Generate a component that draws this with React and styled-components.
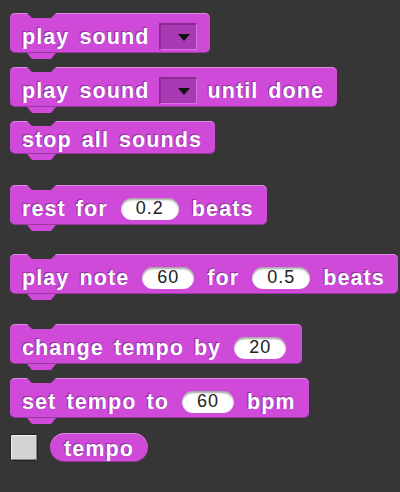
import React from 'react';
import styled, { createGlobalStyle } from 'styled-components';

const GlobalStyle = createGlobalStyle`
  html, body {
    margin: 0;
    padding: 0;
    background: #363636;
  }
  body {
    font-family: "Liberation Sans", Arial, sans-serif;
  }
`;

function Label({ text }) {
  return text.split(' ').map((w, i) => <Word key={i}>{w}</Word>);
}

function App() {
  return (
    <Palette>
      <GlobalStyle />
      <Block>
        <Label text="play sound" />
        <Dropdown />
      </Block>
      <Block $gap={14}>
        <Label text="play sound" />
        <Dropdown />
        <Label text="until done" />
      </Block>
      <Block $gap={14} $slim>
        <Label text="stop all sounds" />
      </Block>
      <Block $gap={31}>
        <Label text="rest for" />
        <Slot>0.2</Slot>
        <Label text="beats" />
      </Block>
      <Block $gap={29}>
        <Label text="play note" />
        <Slot>60</Slot>
        <Label text="for" />
        <Slot>0.5</Slot>
        <Label text="beats" />
      </Block>
      <Block $gap={30}>
        <Label text="change tempo by" />
        <Slot>20</Slot>
      </Block>
      <Block $gap={14}>
        <Label text="set tempo to" />
        <Slot>60</Slot>
        <Label text="bpm" />
      </Block>
      <WatcherRow>
        <Checkbox />
        <Reporter>
          <Word>tempo</Word>
        </Reporter>
      </WatcherRow>
    </Palette>
  );
}

export default App;

const SOUND = '#CF4AD9';
const BG = '#363636';

const Palette = styled.div`
  height: 492px;
  box-sizing: border-box;
  padding: 13px 0 0 10px;
  display: flex;
  flex-direction: column;
  align-items: flex-start;
`;

const Block = styled.div`
  position: relative;
  box-sizing: border-box;
  height: ${(p) => (p.$slim ? 33 : 40)}px;
  margin-top: ${(p) => p.$gap || 0}px;
  padding: ${(p) => (p.$slim ? 5 : 7)}px 13px 0 12px;
  display: flex;
  align-items: center;
  gap: 10px;
  background: ${SOUND};
  border-radius: 5px;
  box-shadow: inset 0 1px 0 rgba(255, 255, 255, 0.35), inset 0 -1px 0 rgba(0, 0, 0, 0.25);
  &::before {
    content: '';
    position: absolute;
    left: 17px;
    top: 0;
    width: 29px;
    height: 5px;
    background: ${BG};
    clip-path: polygon(0 0, 100% 0, calc(100% - 5px) 100%, 5px 100%);
  }
  &::after {
    content: '';
    position: absolute;
    left: 17px;
    top: 100%;
    width: 29px;
    height: 6px;
    background: ${SOUND};
    clip-path: polygon(0 0, 100% 0, calc(100% - 5px) 100%, 5px 100%);
  }
`;

const Word = styled.span`
  color: #ffffff;
  font-weight: 700;
  font-size: 21.5px;
  line-height: 24px;
  letter-spacing: 1.1px;
  text-shadow: -1px -1px 1px rgba(0, 0, 0, 0.35);
  white-space: nowrap;
`;

const Slot = styled.span`
  height: 22px;
  margin: 0 3px;
  padding: 0 15px;
  display: flex;
  align-items: center;
  justify-content: center;
  background: #ffffff;
  border-radius: 11px;
  box-shadow: inset 0 2px 2px rgba(0, 0, 0, 0.35);
  color: #222222;
  font-size: 18px;
  letter-spacing: 1px;
`;

const Dropdown = styled.span`
  position: relative;
  width: 38px;
  height: 27px;
  box-sizing: border-box;
  background: #A93AB4;
  border-top: 2px solid #8A2A93;
  border-left: 2px solid #8A2A93;
  border-bottom: 1px solid #D774DE;
  border-right: 1px solid #D774DE;
  &::after {
    content: '';
    position: absolute;
    right: 6px;
    top: 9px;
    border-left: 6px solid transparent;
    border-right: 6px solid transparent;
    border-top: 7px solid #111111;
  }
`;

const WatcherRow = styled.div`
  margin-top: 15px;
  display: flex;
  align-items: center;
  gap: 12px;
`;

const Checkbox = styled.span`
  width: 28px;
  height: 27px;
  box-sizing: border-box;
  background: #D4D4D4;
  border: 1px solid #222222;
  border-radius: 2px;
  box-shadow: inset 1px 1px 0 #f2f2f2, inset -1px -1px 0 #8a8a8a;
`;

const Reporter = styled.span`
  height: 29px;
  padding: 2px 14px 0;
  box-sizing: border-box;
  display: flex;
  align-items: center;
  background: ${SOUND};
  border-radius: 15px;
  box-shadow: inset 0 1px 0 rgba(255, 255, 255, 0.35), inset 0 -1px 0 rgba(0, 0, 0, 0.25);
`;
